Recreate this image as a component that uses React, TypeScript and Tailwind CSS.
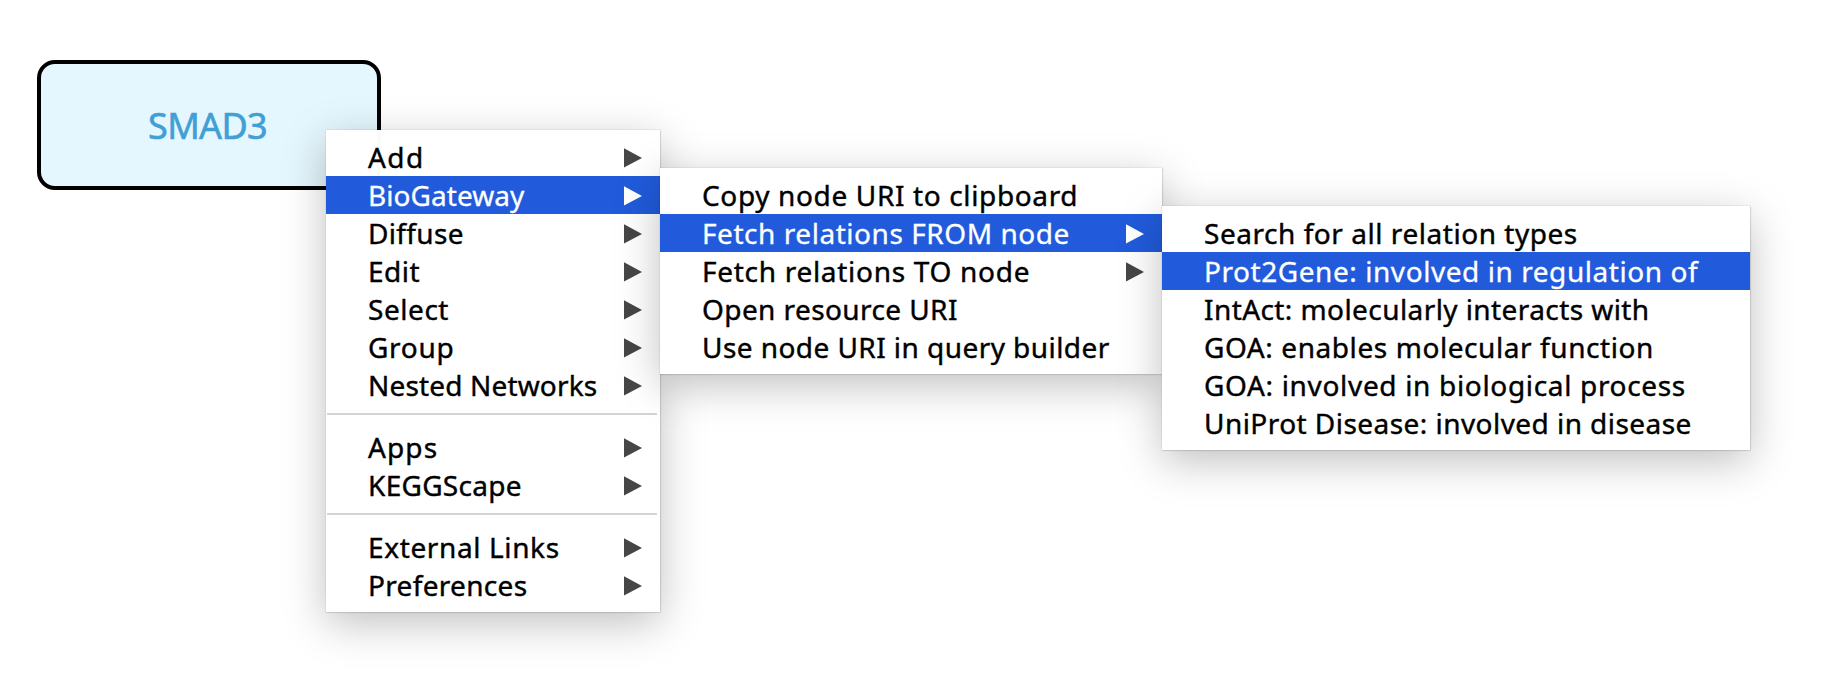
import React from "react";
import clsx from "clsx";

type MenuEntry = {
  label: string;
  tracking: string;
  submenu?: boolean;
  active?: boolean;
};

const nodeMenu: MenuEntry[][] = [
  [
    { label: "Add", tracking: "tracking-[1.4px]", submenu: true },
    { label: "BioGateway", tracking: "tracking-[0.06px]", submenu: true, active: true },
    { label: "Diffuse", tracking: "tracking-[0.34px]", submenu: true },
    { label: "Edit", tracking: "tracking-[0.5px]", submenu: true },
    { label: "Select", tracking: "tracking-[0.55px]", submenu: true },
    { label: "Group", tracking: "tracking-[0.7px]", submenu: true },
    { label: "Nested Networks", tracking: "tracking-[0.16px]", submenu: true },
  ],
  [
    { label: "Apps", tracking: "tracking-[1.12px]", submenu: true },
    { label: "KEGGScape", tracking: "tracking-[0.3px]", submenu: true },
  ],
  [
    { label: "External Links", tracking: "tracking-[0.63px]", submenu: true },
    { label: "Preferences", tracking: "tracking-[0.32px]", submenu: true },
  ],
];

const bioGatewayMenu: MenuEntry[][] = [
  [
    { label: "Copy node URI to clipboard", tracking: "tracking-[0.64px]" },
    { label: "Fetch relations FROM node", tracking: "tracking-[0.55px]", submenu: true, active: true },
    { label: "Fetch relations TO node", tracking: "tracking-[0.71px]", submenu: true },
    { label: "Open resource URI", tracking: "tracking-[0.41px]" },
    { label: "Use node URI in query builder", tracking: "tracking-[0.44px]" },
  ],
];

const relationMenu: MenuEntry[][] = [
  [
    { label: "Search for all relation types", tracking: "tracking-[0.54px]" },
    { label: "Prot2Gene: involved in regulation of", tracking: "tracking-[0.56px]", active: true },
    { label: "IntAct: molecularly interacts with", tracking: "tracking-[0.42px]" },
    { label: "GOA: enables molecular function", tracking: "tracking-[0.58px]" },
    { label: "GOA: involved in biological process", tracking: "tracking-[0.67px]" },
    { label: "UniProt Disease: involved in disease", tracking: "tracking-[0.45px]" },
  ],
];

function SubmenuArrow() {
  return (
    <svg width="18" height="20" viewBox="0 0 18 20" className="mt-0.5 shrink-0" fill="currentColor">
      <path d="M0 0.3 L18 9.9 L0 19.5 Z" />
    </svg>
  );
}

function MenuRow({ entry }: { entry: MenuEntry }) {
  return (
    <li
      className={clsx(
        "flex h-[38px] items-center justify-between pr-[18px] pl-[42px]",
        entry.active ? "bg-[#215bdb] text-white" : "text-black"
      )}
    >
      <span
        className={clsx(
          "text-[28px] leading-[38px] whitespace-nowrap",
          entry.active ? "[-webkit-text-stroke:0.3px_currentColor]" : "[-webkit-text-stroke:0.4px_currentColor]",
          entry.tracking
        )}
      >
        {entry.label}
      </span>
      {entry.submenu ? (
        <span className={entry.active ? "text-white" : "text-[#464646]"}>
          <SubmenuArrow />
        </span>
      ) : null}
    </li>
  );
}

function ContextMenu({ groups, className }: { groups: MenuEntry[][]; className: string }) {
  return (
    <div
      className={clsx(
        "flex shrink-0 flex-col bg-white/98 py-2 shadow-[0_0_1.5px_0.5px_rgba(0,0,0,0.38),0_11px_40px_rgba(0,0,0,0.25)]",
        className
      )}
    >
      {groups.map((group, i) => (
        <React.Fragment key={group[0].label}>
          {i > 0 ? <div className="mt-[9px] mr-[3px] mb-[13px] ml-px h-0.5 bg-[#d4d4d4]" /> : null}
          <ul className="flex flex-col">
            {group.map((entry) => (
              <MenuRow key={entry.label} entry={entry} />
            ))}
          </ul>
        </React.Fragment>
      ))}
    </div>
  );
}

function GraphNode({ label }: { label: string }) {
  return (
    <div className="absolute top-[60px] left-[37px] flex h-[130px] w-[344px] items-center justify-center rounded-[18px] border-4 border-black bg-[#e5f7fe]">
      <span className="pt-0.5 pr-[3px] text-[36px] leading-none tracking-[-0.68px] text-[#419fd5] [-webkit-text-stroke:0.6px_currentColor]">
        {label}
      </span>
    </div>
  );
}

export default function App() {
  return (
    <main className="relative h-[684px] w-full overflow-hidden bg-white font-['Noto_Sans','Open_Sans',sans-serif]">
      <GraphNode label="SMAD3" />
      {/* each submenu opens one row below its parent */}
      <div className="absolute top-[130px] left-[326px] flex items-start">
        <ContextMenu groups={nodeMenu} className="w-[334px]" />
        <ContextMenu groups={bioGatewayMenu} className="mt-[38px] w-[502px]" />
        <ContextMenu groups={relationMenu} className="mt-[76px] w-[588px]" />
      </div>
    </main>
  );
}
